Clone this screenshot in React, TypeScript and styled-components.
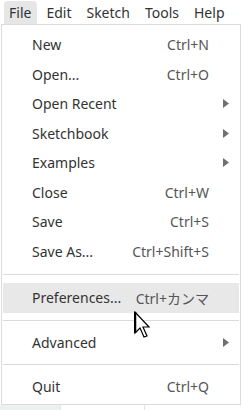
import React from "react";
import styled, { createGlobalStyle } from "styled-components";

const GlobalStyle = createGlobalStyle`
  html, body {
    margin: 0;
    padding: 0;
    background: #ffffff;
  }
  body {
    font-family: "Noto Sans", "Noto Sans CJK JP", sans-serif;
    color: #333333;
  }
`;

const Screen = styled.div`
  position: relative;
  width: 242px;
  height: 410px;
  overflow: hidden;
  background: #ffffff;
`;

const MenuBar = styled.div`
  display: flex;
  align-items: stretch;
  height: 24px;
  padding: 1px 0 0 4px;
  box-sizing: border-box;
`;

const BarItem = styled.div<{ $open?: boolean }>`
  display: flex;
  align-items: center;
  padding: 0 6px 0 5px;
  margin-right: 4px;
  font-size: 14px;
  color: #333333;
  border-radius: 4px 4px 0 0;
  background: ${(p) => (p.$open ? "#e6e6e6" : "transparent")};
`;

const Dropdown = styled.div`
  margin-left: 1px;
  width: 240px;
  box-sizing: border-box;
  border: 1px solid #dcdcdc;
  padding: 5px 1px 2px 1px;
  background: #ffffff;
`;

const Row = styled.div<{ $active?: boolean }>`
  display: flex;
  align-items: center;
  height: 29.5px;
  padding: 0 10px 0 29px;
  font-size: 14px;
  color: #333333;
  background: ${(p) => (p.$active ? "#e8e8e8" : "transparent")};
`;

const Label = styled.span`
  flex: 1;
  white-space: nowrap;
`;

const Shortcut = styled.span`
  color: #555555;
  margin-right: 20px;
  white-space: nowrap;
`;

const Arrow = styled.svg`
  width: 6px;
  height: 9px;
`;

const Separator = styled.div<{ $h: number }>`
  height: ${(p) => p.$h}px;
  display: flex;
  align-items: center;
  &::after {
    content: "";
    flex: 1;
    height: 1px;
    background: #dadada;
  }
`;

const Below = styled.div`
  display: flex;
  height: 6px;
`;

const BelowCell = styled.div<{ $w: number; $bg: string }>`
  width: ${(p) => p.$w}px;
  background: ${(p) => p.$bg};
  border-right: 1px solid #e4e4e4;
`;

const Cursor = styled.svg`
  position: absolute;
  left: 134px;
  top: 311px;
`;

type Item =
  | { kind: "item"; label: string; shortcut?: string; sub?: boolean; active?: boolean }
  | { kind: "sep"; h: number };

const items: Item[] = [
  { kind: "item", label: "New", shortcut: "Ctrl+N" },
  { kind: "item", label: "Open...", shortcut: "Ctrl+O" },
  { kind: "item", label: "Open Recent", sub: true },
  { kind: "item", label: "Sketchbook", sub: true },
  { kind: "item", label: "Examples", sub: true },
  { kind: "item", label: "Close", shortcut: "Ctrl+W" },
  { kind: "item", label: "Save", shortcut: "Ctrl+S" },
  { kind: "item", label: "Save As...", shortcut: "Ctrl+Shift+S" },
  { kind: "sep", h: 17 },
  { kind: "item", label: "Preferences...", shortcut: "Ctrl+カンマ", active: true },
  { kind: "sep", h: 15 },
  { kind: "item", label: "Advanced", sub: true },
  { kind: "sep", h: 15 },
  { kind: "item", label: "Quit", shortcut: "Ctrl+Q" },
];

function SubArrow() {
  return (
    <Arrow viewBox="0 0 6 9">
      <path d="M0 0 L6 4.5 L0 9 Z" fill="#707070" />
    </Arrow>
  );
}

export default function App() {
  return (
    <Screen>
      <GlobalStyle />
      <MenuBar>
        <BarItem $open>File</BarItem>
        <BarItem>Edit</BarItem>
        <BarItem>Sketch</BarItem>
        <BarItem>Tools</BarItem>
        <BarItem>Help</BarItem>
      </MenuBar>
      <Dropdown>
        {items.map((it, i) =>
          it.kind === "sep" ? (
            <Separator key={i} $h={it.h} />
          ) : (
            <Row key={i} $active={it.active}>
              <Label>{it.label}</Label>
              {it.shortcut && <Shortcut>{it.shortcut}</Shortcut>}
              {it.sub && <SubArrow />}
            </Row>
          )
        )}
      </Dropdown>
      <Below>
        <BelowCell $w={60} $bg="#eef1f1" />
        <BelowCell $w={83} $bg="#ffffff" />
      </Below>
      <Cursor width="17" height="28" viewBox="0 0 17 28">
        <path
          d="M1 1 L1 22 L6 17 L10 26 L13 25 L9 16 L15 16 Z"
          fill="#ffffff"
          stroke="#000000"
          strokeWidth="1.2"
          strokeLinejoin="miter"
        />
        <path d="M1 1 L1 22" stroke="#000000" strokeWidth="2.5" />
      </Cursor>
    </Screen>
  );
}
